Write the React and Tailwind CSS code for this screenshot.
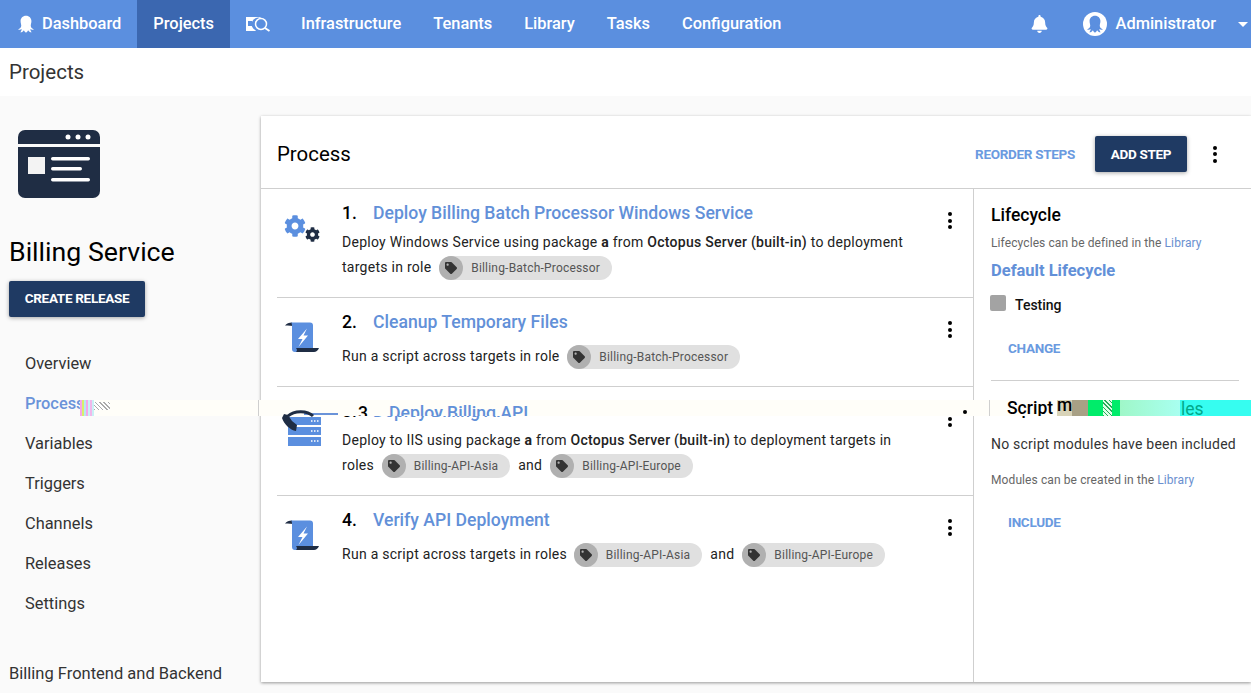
import React from "react";
import { FaCog, FaTag, FaBell } from "react-icons/fa";

const Octo = ({ className, color = "currentColor" }) => (
  <svg viewBox="0 0 24 24" className={className} fill={color}>
    <path d="M12 2c-4 0-6.500 3-6.500 6.500 0 2.500.8 4 .8 5.500 0 2-1.800 3.500-3.800 4.500 1.500.8 3.200.5 4.300-.5-.1 1.800-.8 3-1.800 4 2 .2 3.500-.8 4.500-2.500.4 1 .9 2 2.500 3 1.600-1 2.100-2 2.500-3 1 1.700 2.500 2.700 4.500 2.500-1-1-1.700-2.200-1.800-4 1.100 1 2.800 1.300 4.300.5-2-1-3.800-2.500-3.800-4.500 0-1.500.8-3 .8-5.500C18.500 5 16 2 12 2z" />
  </svg>
);

const Scroll = () => (
  <svg viewBox="0 0 34 31" className="w-[34px] h-[31px]">
    <path d="M0 3.500C1.500 1.500 4 .5 7 .5L8 4C5 3.300 2.500 3.300 0 3.500z" fill="#1f2d44" />
    <path d="M6 .5h19a3 3 0 0 1 3 3V27H12v3h-2a3 3 0 0 1-3-3V4.500C7 3 7 1.500 6 .5z" fill="#5b8fdf" />
    <path d="M11 26h23c-1 2.500-3 4-5 4H11c1.500-1 1-3 0-4z" fill="#1f2d44" />
    <path d="M22 6.500L13 17h4.500L13.500 25 23 13.500h-4.500L22 6.500z" fill="#fff" />
  </svg>
);

const Tag = ({ label }) => (
  <span className="inline-flex items-center h-6 rounded-full bg-[#e0e0e0] text-[12px] text-[#555] align-middle">
    <span className="w-6 h-6 rounded-full bg-[#b0b0b0] flex items-center justify-center text-[#333]">
      <FaTag className="w-[12px] h-[12px]" />
    </span>
    <span className="pl-2 pr-3 tracking-[0.2px]">{label}</span>
  </span>
);

const Kebab = ({ cls = "" }) => (
  <span className={`flex flex-col gap-[2.500px] ${cls}`}>
    <i className="w-1 h-1 rounded-full bg-black block" />
    <i className="w-1 h-1 rounded-full bg-black block" />
    <i className="w-1 h-1 rounded-full bg-black block" />
  </span>
);

const Step = ({ n, title, icon, h, children }) => (
  <div className={`flex ml-4 border-b border-[#cfcfcf] last:border-b-0 ${h}`}>
    <div className="w-[65px] pt-[23px] shrink-0 flex justify-start">{icon}</div>
    <div className="flex-1 pt-[12px] min-w-0">
      <div className="flex h-[24px] items-center text-[17.600px] font-medium leading-6">
        <span className="w-[31px] text-black">{n}.</span>
        <span className="text-[#6290d8]">{title}</span>
      </div>
      <div className="text-[14px] leading-[25px] text-[#222] mt-[5px] tracking-[0.27px] w-[572px]">{children}</div>
    </div>
    <div className="w-[25px] pt-[23px] shrink-0 -ml-px"><Kebab /></div>
  </div>
);

const Gears = () => (
  <span className="relative block w-[40px] h-[36px] ml-[6px]">
    <FaCog className="absolute left-[1px] top-[3px] w-[22px] h-[22px] text-[#5b8fdf]" />
    <FaCog className="absolute left-[22px] top-[15px] w-[15px] h-[15px] text-[#1f2d44]" />
  </span>
);

const Server = () => (
  <svg viewBox="0 0 41 40" className="w-[41px] h-[40px] ml-[4px] -mt-[2px]">
    <path d="M7 9h33v8H7zM7 19h33v8H7zM7 29h33v9H7z" fill="#5b8fdf" />
    <path d="M30 13h1.500M33 13h1.500M36 13h1.500M30 23h1.500M33 23h1.500M36 23h1.500M30 33h1.500M33 33h1.500M36 33h1.500" stroke="#fff" strokeWidth="1.500" />
  </svg>
);

export default function App() {
  return (
    <div className="relative h-[693px] w-[1251px] overflow-hidden bg-[#fafafa] font-['Roboto',sans-serif]">
      <header className="h-12 bg-[#5b8fdf] text-white flex items-center text-[16.400px] font-medium">
        <a className="flex items-center pl-[16px] pr-4 h-full gap-[6px]"><Octo className="w-[20px] h-[20px]" />Dashboard</a>
        <a className="flex items-center px-4 h-full bg-[#3b67b0]">Projects</a>
        <a className="flex items-center w-[71px] pl-[16px] h-full">
          <svg viewBox="0 0 24 16" className="w-[24px] h-[16px]">
            <path d="M0 1h14.500v1A6.500 6.500 0 0 0 10 14.500V15H0z" fill="#fff" />
            <path d="M2 5h4v5H2zM7 5h3v1H7zM7 8h2.500v1H7z" fill="#5b8fdf" />
            <circle cx="15" cy="8" r="5.500" fill="none" stroke="#fff" strokeWidth="1.500" />
            <path d="M19 12l4.500 3" stroke="#fff" strokeWidth="2" />
          </svg>
        </a>
        <a className="pr-4">Infrastructure</a>
        <a className="px-4">Tenants</a>
        <a className="px-4">Library</a>
        <a className="px-4">Tasks</a>
        <a className="px-4">Configuration</a>
        <div className="ml-auto flex items-center h-full">
          <FaBell className="w-[17px] h-[18px] mr-[35px]" />
          <span className="w-[24px] h-[24px] rounded-full bg-white flex items-center justify-center mr-[9px]"><Octo className="w-[20px] h-[20px]" color="#5b8fdf" /></span>
          <span>Administrator</span>
          <span className="ml-[22px] mr-[3px] border-x-[5px] border-t-[5px] border-x-transparent border-t-white" />
        </div>
      </header>
      <div className="h-12 bg-white pl-[9px] flex items-center text-[20.500px] text-[#333]">Projects</div>

      <div className="flex">
        <aside className="w-[261px] shrink-0 flex flex-col h-[597px]">
          <svg viewBox="0 0 84 70" className="w-[84px] h-[70px] ml-[17px] mt-[33px]">
            <rect x="1" y="1" width="82" height="68" rx="7" fill="#1f2d44" />
            <path d="M1 15h82v3H1z" fill="#fafafa" />
            <circle cx="51" cy="8" r="2.500" fill="#fff" /><circle cx="61" cy="8" r="2.500" fill="#fff" /><circle cx="71" cy="8" r="2.500" fill="#fff" />
            <rect x="11" y="28" width="17" height="17" fill="#f3f3f3" />
            <rect x="34" y="28" width="39" height="3.500" rx="1.700" fill="#fff" />
            <rect x="34" y="38" width="31" height="3.500" rx="1.700" fill="#fff" />
            <rect x="34" y="49" width="39" height="3.500" rx="1.700" fill="#fff" />
          </svg>
          <h1 className="ml-[9px] mt-[34px] text-[26.700px] leading-[38px] text-black">Billing Service</h1>
          <button className="ml-[9px] mt-[10px] w-[136px] h-9 pb-[2px] rounded-[2px] bg-[#1f3a63] text-white text-[13.500px] font-bold tracking-[-0.3px] shadow-[0_1px_4px_rgba(0,0,0,0.35)]">CREATE RELEASE</button>
          <ul className="mt-[27px] ml-[25px] text-[16.400px] leading-[40px] text-[#333]">
            <li>Overview</li>
            <li className="text-[#6a93d9] font-medium">Process</li>
            <li>Variables</li>
            <li>Triggers</li>
            <li>Channels</li>
            <li>Releases</li>
            <li>Settings</li>
          </ul>
          <div className="mt-[38px] ml-[9px] text-[16.500px] leading-6 text-[#333]">Billing Frontend and Backend</div>
        </aside>

        <main className="mt-5 w-[990px] h-[566px] bg-white shadow-[0_1px_3px_rgba(0,0,0,0.4)] flex flex-col">
          <div className="h-[73px] shrink-0 border-b border-[#cfcfcf] flex items-center pl-4 pr-[34px] pt-1">
            <h2 className="text-[20.400px] text-black">Process</h2>
            <a className="ml-auto text-[13.500px] font-bold text-[#6a9ae0] tracking-[-0.3px]">REORDER STEPS</a>
            <button className="ml-[20px] w-[92px] h-9 rounded-[2px] bg-[#1f3a63] text-white text-[13.500px] font-bold tracking-[-0.3px] shadow-[0_1px_4px_rgba(0,0,0,0.35)]">ADD STEP</button>
            <Kebab cls="ml-[26px]" />
          </div>
          <div className="flex flex-1 min-h-0">
            <section className="w-[713px] border-r border-[#cfcfcf]">
              <Step n="1" h="h-[109px]" title="Deploy Billing Batch Processor Windows Service" icon={<Gears />}>
                Deploy Windows Service using package <b className="font-bold">a</b> from <b className="font-medium">Octopus Server (built-in)</b> to deployment targets in role <span className="ml-[4px]"><Tag label="Billing-Batch-Processor" /></span>
              </Step>
              <Step n="2" h="h-[89px]" title="Cleanup Temporary Files" icon={<span className="ml-[8px] mt-[1px]"><Scroll /></span>}>
                <span className="block mt-[10px]">Run a script across targets in role <span className="ml-[4px]"><Tag label="Billing-Batch-Processor" /></span></span>
              </Step>
              <Step n="3" h="h-[109px]" title="Deploy Billing API" icon={<Server />}>
                Deploy to IIS using package <b className="font-bold">a</b> from <b className="font-medium">Octopus Server (built-in)</b> to deployment targets in roles <span className="ml-[4px]"><Tag label="Billing-API-Asia" /></span><span className="mx-[8px]">and</span><Tag label="Billing-API-Europe" />
              </Step>
              <Step n="4" h="h-[90px]" title="Verify API Deployment" icon={<span className="ml-[8px] mt-[1px]"><Scroll /></span>}>
                <span className="block mt-[10px]">Run a script across targets in roles <span className="ml-[3px]"><Tag label="Billing-API-Asia" /></span><span className="mx-[8px]">and</span><Tag label="Billing-API-Europe" /></span>
              </Step>
            </section>
            <section className="flex-1 min-w-0 pl-[17px] pr-3">
              <h3 className="mt-[14px] text-[17.500px] leading-6 font-medium text-black">Lifecycle</h3>
              <p className="mt-[7px] text-[12px] leading-[18px] text-[#666] tracking-[0.1px]">Lifecycles can be defined in the <span className="text-[#6a8fcf]">Library</span></p>
              <div className="mt-[7px] text-[16.500px] leading-6 font-bold text-[#6290d8]">Default Lifecycle</div>
              <div className="mt-[12px] flex items-center h-5 text-[14px] font-medium text-[#111]">
                <span className="w-4 h-4 rounded-[2px] bg-[#a3a3a3] mr-[9px] -ml-px -mt-[4px]" />Testing
              </div>
              <a className="block mt-[23px] ml-[17px] text-[13.500px] leading-5 font-bold text-[#6a9ae0] tracking-[-0.3px]">CHANGE</a>
              <div className="mt-[22px] border-t border-[#cfcfcf]" />
              <h3 className="mt-[15px] text-[17.500px] leading-6 font-medium text-black">Script modules</h3>
              <p className="mt-[14px] text-[14px] leading-5 text-[#333] tracking-[0.22px] whitespace-nowrap">No script modules have been included</p>
              <p className="mt-[17px] text-[12px] leading-[18px] text-[#666] tracking-[0.1px]">Modules can be created in the <span className="text-[#6a8fcf]">Library</span></p>
              <a className="block mt-[23px] ml-[17px] text-[13.500px] leading-5 font-bold text-[#6a9ae0] tracking-[-0.3px]">INCLUDE</a>
            </section>
          </div>
        </main>
      </div>

      {/* render-glitch band lying over the page */}
      <div className="absolute left-[80px] top-[400px] w-[1171px] h-4 overflow-hidden bg-[#fffef9]">
        <span className="absolute left-0 top-0 w-[8px] h-4 bg-[repeating-linear-gradient(90deg,#f6a7e8_0_2px,#d8f06a_2px_4px,#b8e6f5_4px_6px)]" />
        <span className="absolute left-[8px] top-0 w-[6px] h-4 bg-[repeating-linear-gradient(90deg,#c9f0f5_0_2px,#f0b8ea_2px_4px)]" />
        <span className="absolute left-[14px] top-[2px] w-[16px] h-2 bg-[repeating-linear-gradient(45deg,#aaa_0_1px,#fff_1px_3px)]" />
        <span className="absolute left-[178px] top-0 w-px h-4 bg-[#cfcfcf]" />
        <span className="absolute left-[278px] top-[1px] text-[17.600px] font-medium leading-6 text-black">3.</span>
        <span className="absolute left-[309px] top-[1px] text-[17.600px] font-medium leading-6 text-[#6290d8]">Deploy Billing API</span>
        <span className="absolute left-[224px] top-[13px] w-[34px] h-[2px] bg-[#6a93d9]" />
        <span className="absolute left-[883px] top-[10px] w-1 h-1 rounded-full bg-black" />
        <span className="absolute left-[909px] top-0 w-px h-4 bg-[#cfcfcf]" />
        <span className="absolute left-[927px] top-[-4px] text-[17.500px] leading-6 font-medium text-black">Script</span>
        <span className="absolute left-[977px] top-0 w-[15px] h-4 bg-[#d8d3b8]" />
        <span className="absolute left-[977px] top-[-7px] text-[17.500px] leading-6 font-medium text-black h-4">m</span>
        <span className="absolute left-[992px] top-0 w-[16px] h-4 bg-[#a8a085]" />
        <span className="absolute left-[1008px] top-0 w-[32px] h-4 bg-[#00ec6a]" />
        <span className="absolute left-[1023px] top-0 w-[9px] h-4 bg-[repeating-linear-gradient(45deg,#29a85a_0_1px,#e0ffe8_1px_3px)]" />
        <span className="absolute left-[1040px] top-0 w-[60px] h-4 bg-[linear-gradient(90deg,#9ff7c8,#a8fff0)]" />
        <span className="absolute left-[1100px] top-0 w-[71px] h-4 bg-[#36fdf0]" />
        <span className="absolute left-[1101px] top-[-3px] text-[17.500px] leading-6 text-[#00a98a]">les</span>
      </div>
      <svg viewBox="0 0 36 24" className="absolute left-[282px] top-[410px] w-[36px] h-[24px]">
        <path d="M0 8c2 6 8 12 14 13l1-6-5-4-4-6-4-1z" fill="#1f2d44" />
        <path d="M6 6c6-5.500 19-6 25 0" fill="none" stroke="#1f2d44" strokeWidth="3" />
      </svg>
    </div>
  );
}
